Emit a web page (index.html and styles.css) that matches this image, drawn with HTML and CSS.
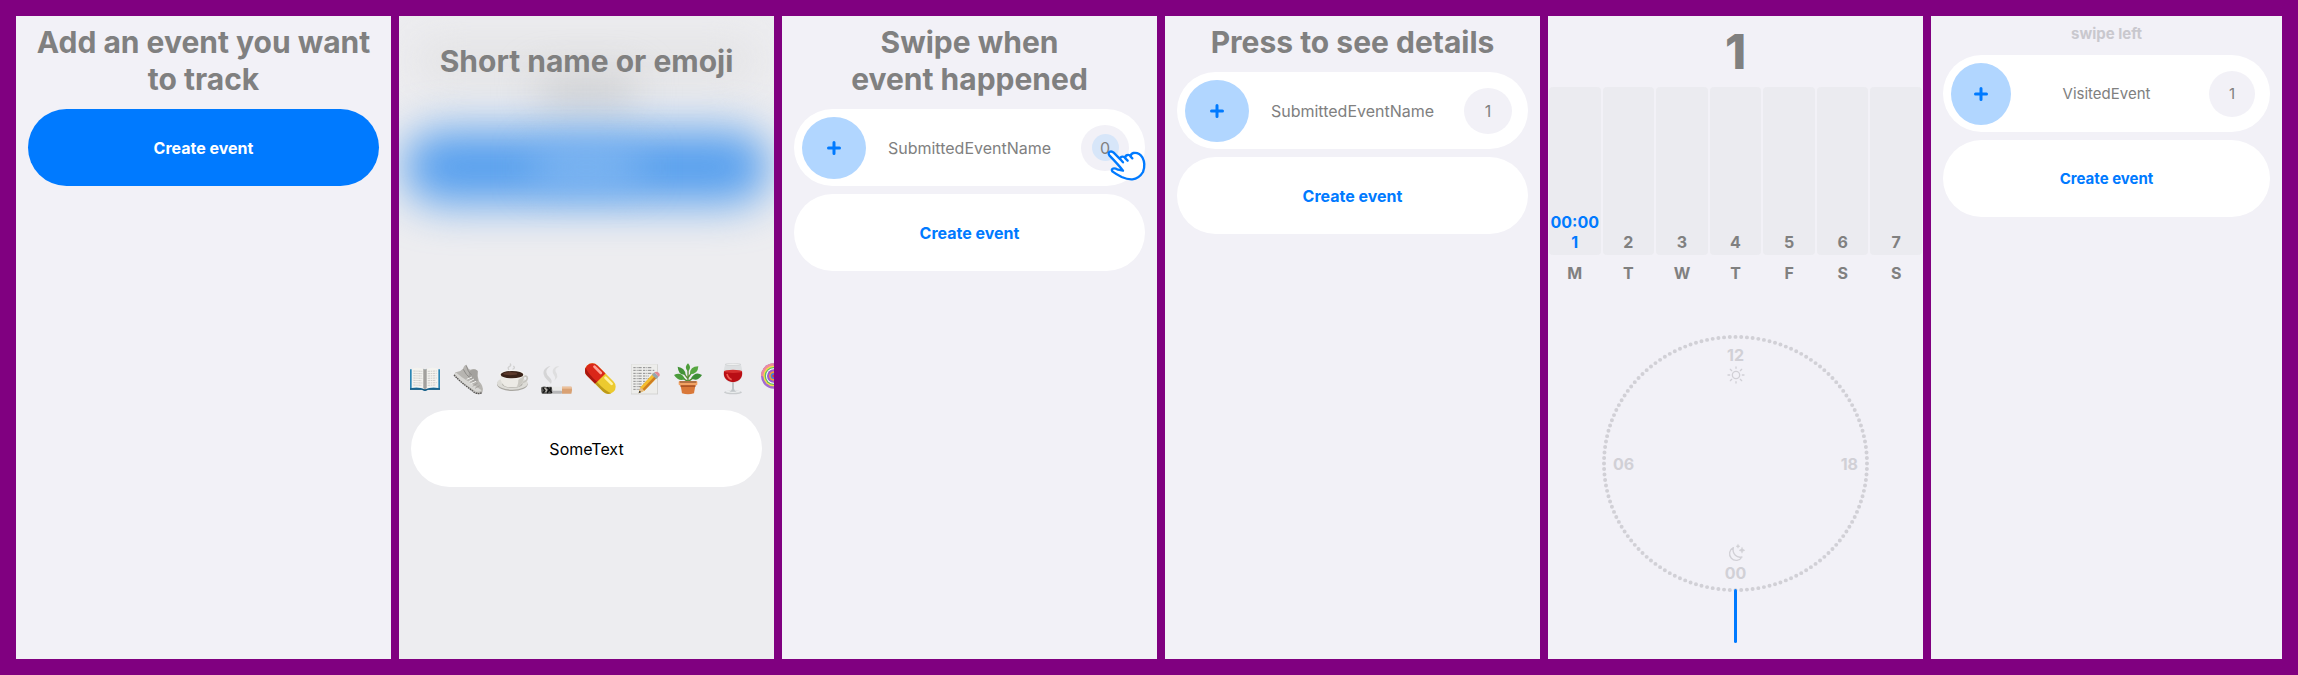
FILE: index.html
```html
<!DOCTYPE html>
<html lang="en">
<head>
<meta charset="utf-8">
<title>Event tracker</title>
<link rel="stylesheet" href="styles.css">
</head>
<body>
<main class="board">
  <section class="screen">
    <h2 class="title">Add an event you want to track</h2>
    <button class="pill pill-primary" type="button">Create event</button>
  </section>

  <section class="screen screen-compose">
    <div class="haze" aria-hidden="true">
      <div class="haze-title"></div>
      <div class="haze-line"></div>
      <div class="haze-pill"></div>
      <div class="haze-label"></div>
    </div>
    <h2 class="title">Short name or emoji</h2>
    <div class="composer">
      <div class="emoji-row">
        <button class="emoji" type="button" aria-label="Book">
          <svg viewBox="0 0 96 96">
            <path d="M3 19H93V80H58L48 84L38 80H3Z" fill="#2b86b4"/>
            <path d="M3 76H93V80H58L48 84L38 80H3Z" fill="#175a80"/>
            <path d="M8 17Q30 10 48 20Q66 10 88 17V75Q66 71 48 79Q30 71 8 75Z" fill="#f4f3ef"/>
            <path d="M42 17Q48 18 48 20Q48 18 54 17V75Q49 76 48 79Q47 76 42 75Z" fill="#b9b8b4"/>
            <path d="M48 20V79" stroke="#77736f" stroke-width="2"/>
            <path d="M13 24L40 25M13 31L40 32M13 38L39 39M13 45L40 46M13 52L38 53M13 59L40 60M13 66L38 67M56 25L83 24M56 32L83 31M56 39L82 38M56 46L83 45M56 53L81 52M56 60L83 59M56 67L81 66" stroke="#bbb9b6" stroke-width="2" stroke-dasharray="7 2 4 2"/>
          </svg>
        </button>
        <button class="emoji" type="button" aria-label="Running shoe">
          <svg viewBox="0 0 96 96">
            <path d="M3 36L8 27Q19 29 30 17Q34 5 41 5Q42 16 52 20Q65 15 74 24Q72 41 78 55Q92 70 89 84Q89 93 74 93L52 78Z" fill="#b7b5b1"/>
            <path d="M8 28Q26 44 45 55L86 82Q82 88 69 86L44 69Q20 53 5 35Z" fill="#d8d7d4"/>
            <path d="M48 25Q65 15 74 24Q71 41 75 53L60 57L47 44Z" fill="#a3a19e"/>
            <path d="M31 19Q39 37 52 45M40 8Q45 29 56 36" fill="none" stroke="#8e8c89" stroke-width="3"/>
            <path d="M41 49L57 42M47 56L63 48M53 62L69 55" stroke="#f2f2f0" stroke-width="3"/>
            <path d="M3 36Q22 57 46 74L65 89Q80 95 87 88" fill="none" stroke="#585653" stroke-width="4" stroke-dasharray="5 2"/>
            <path d="M59 70L74 60M66 76L80 68" stroke="#97948f" stroke-width="2"/>
          </svg>
        </button>
        <button class="emoji" type="button" aria-label="Coffee">
          <svg viewBox="0 0 96 96">
            <ellipse cx="46" cy="64" rx="46" ry="20" fill="#a9a7a1"/>
            <ellipse cx="46" cy="61" rx="46" ry="19" fill="#dddcd7"/>
            <ellipse cx="46" cy="63" rx="31" ry="12" fill="#b4b2ab"/>
            <path d="M78 41Q91 36 91 46Q89 57 70 60" fill="none" stroke="#c6c4be" stroke-width="5"/>
            <path d="M8 33Q10 70 33 73H58Q80 69 83 33Z" fill="#eceae5"/>
            <path d="M58 73Q80 69 83 33Q69 48 64 50Q64 66 58 73Z" fill="#cbc9c2"/>
            <ellipse cx="45" cy="34" rx="38" ry="14" fill="#f4f3f0"/>
            <ellipse cx="45" cy="35" rx="34" ry="11" fill="#392217"/>
            <ellipse cx="40" cy="32" rx="21" ry="5" fill="#5b392a"/>
            <path d="M35 19Q31 13 38 10Q43 7 40 3M48 18Q55 15 50 10" fill="none" stroke="#d1d1d1" stroke-width="4" stroke-linecap="round"/>
          </svg>
        </button>
        <button class="emoji" type="button" aria-label="Cigarette">
          <svg viewBox="0 0 96 96">
            <path d="M30 63Q25 57 16 48Q3 34 9 22Q15 11 29 9Q15 17 16 28Q17 38 27 45Q35 52 30 63Z" fill="#d5d5d6"/>
            <path d="M39 53Q46 45 39 36Q29 23 43 12Q49 8 55 11Q40 15 44 26Q56 41 39 53Z" fill="#dededf"/>
            <rect x="1" y="71" width="92" height="21" rx="3" fill="#e9e9e8"/>
            <rect x="1" y="83" width="62" height="9" rx="2" fill="#b6b6b8"/>
            <path d="M1 73Q9 68 17 72L31 71Q37 83 30 92H4Q-1 85 1 73Z" fill="#555452"/>
            <path d="M6 74L12 83L5 89M18 73L25 80L18 90M30 73L27 83L33 90" fill="none" stroke="#171717" stroke-width="4"/>
            <path d="M11 75L17 81L14 88" fill="none" stroke="#bbb8b1" stroke-width="4"/>
            <path d="M63 71H91Q96 82 91 92H63Z" fill="#d9a173"/>
            <path d="M63 71H91V77H63Z" fill="#ecc19b"/>
          </svg>
        </button>
        <button class="emoji" type="button" aria-label="Medicine">
          <svg viewBox="0 0 96 96">
            <g transform="rotate(45 46 47)">
              <rect x="-10" y="25" width="112" height="44" rx="22" fill="#ecca2f"/>
              <path d="M46 25H12A22 22 0 0 0 12 69H46Z" fill="#da2719"/>
              <path d="M46 69H12A22 22 0 0 1-8 55Q9 63 46 61Z" fill="#a81710"/>
              <path d="M46 69H80A22 22 0 0 0 100 55Q82 63 46 61Z" fill="#bc9919"/>
              <rect x="4" y="30" width="35" height="8" rx="4" fill="#ffa296"/>
              <rect x="51" y="30" width="34" height="8" rx="4" fill="#fff3a1"/>
            </g>
          </svg>
        </button>
        <button class="emoji" type="button" aria-label="Memo">
          <svg viewBox="0 0 96 96">
            <rect x="6" y="4" width="81" height="90" fill="#c9c9c7"/>
            <rect x="7" y="4" width="78" height="88" fill="#ededeb"/>
            <path d="M13 14H70M13 22H76M13 31H73M13 39H59M13 47H66M13 55H57M13 63H48M13 71H42M13 79H32" stroke="#8c8c8c" stroke-width="3" stroke-dasharray="7 3 3 2 10 4"/>
            <path d="M29 91L34 73L73 31L85 43L46 83Z" fill="#f4bd2e"/>
            <path d="M40 79L80 37L85 43L46 83Z" fill="#cf7e21"/>
            <path d="M29 91L34 73L46 83Z" fill="#e6bd86"/>
            <path d="M29 91L31 83L37 87Z" fill="#343434"/>
            <path d="M69 36L76 28L89 41L82 48Z" fill="#93a6ae"/>
            <path d="M76 28Q83 23 90 30Q95 37 89 41Z" fill="#e38a91"/>
          </svg>
        </button>
        <button class="emoji" type="button" aria-label="Potted plant">
          <svg viewBox="0 0 96 96">
            <path d="M45 57V18M44 55L24 42M46 55L67 40M44 46L28 25M46 43L60 23" fill="none" stroke="#568c32" stroke-width="4"/>
            <path d="M45 25Q31 14 45 1Q58 14 45 25Z" fill="#4d9d3a"/>
            <path d="M38 35Q16 38 14 11Q36 14 38 35Z" fill="#439237"/>
            <path d="M51 34Q50 10 76 10Q75 34 51 34Z" fill="#57a741"/>
            <path d="M36 48Q18 58 3 36Q25 25 36 48Z" fill="#4b9c3b"/>
            <path d="M54 46Q67 23 87 36Q73 58 54 46Z" fill="#3e8e36"/>
            <path d="M22 62H68L63 91Q45 97 27 91Z" fill="#d97839"/>
            <rect x="17" y="54" width="56" height="13" rx="3" fill="#f2a365"/>
            <path d="M20 57H70" stroke="#754127" stroke-width="3"/>
            <path d="M22 67H68L67 72H23Z" fill="#ae5526"/>
          </svg>
        </button>
        <button class="emoji" type="button" aria-label="Wine">
          <svg viewBox="0 0 96 96">
            <ellipse cx="48" cy="88" rx="27" ry="6" fill="#c9ccce"/>
            <ellipse cx="48" cy="86" rx="22" ry="4" fill="#eceeef"/>
            <path d="M45 53H51V77Q52 84 59 86H37Q44 84 45 77Z" fill="#bfc4c7"/>
            <path d="M25 3Q18 25 20 37Q25 58 48 60Q71 58 76 37Q78 25 71 3Z" fill="#dddfe1"/>
            <path d="M21 25H75Q79 54 48 58Q17 54 21 25Z" fill="#b90e14"/>
            <ellipse cx="48" cy="25" rx="27" ry="5" fill="#d42e2d"/>
            <path d="M30 33Q33 46 44 50" fill="none" stroke="#f15b51" stroke-width="5"/>
            <ellipse cx="48" cy="4" rx="23" ry="3" fill="#f3f4f4" stroke="#b1b3b6"/>
          </svg>
        </button>
        <button class="emoji" type="button" aria-label="Lollipop">
          <svg viewBox="0 0 96 96">
            <path d="M58 57L91 90" stroke="#ddd" stroke-width="6"/>
            <circle cx="38" cy="39" r="38" fill="#a26bd0"/>
            <path d="M38 1A38 38 0 0 0 0 39L10 41Q12 13 38 10Z" fill="#ef8b9c"/>
            <circle cx="38" cy="39" r="31" fill="#f7df47"/>
            <circle cx="38" cy="39" r="27" fill="#5cba68"/>
            <circle cx="38" cy="39" r="23" fill="#fff"/>
            <circle cx="38" cy="39" r="20" fill="#9b59d0"/>
            <circle cx="38" cy="39" r="14" fill="#ef9b37"/>
            <circle cx="38" cy="39" r="9" fill="#3f7fdc"/>
            <circle cx="38" cy="39" r="4" fill="#e33"/>
          </svg>
        </button>
      </div>
      <input class="pill pill-input" type="text" value="SomeText" aria-label="Short name or emoji">
    </div>
  </section>

  <section class="screen">
    <h2 class="title">Swipe when<br>event happened</h2>
    <div class="pill event">
      <button class="add" type="button" aria-label="Add"><svg class="plus" viewBox="0 0 14 14"><path d="M7 1.5V12.5M1.500 7H12.500"/></svg></button>
      <span class="name">SubmittedEventName</span>
      <span class="count"><span class="touch">0</span>
        <svg class="pointer" viewBox="140 118 123 99" aria-hidden="true"><path d="M147 137Q142 129 149 126Q155 124 160 129L180 149Q179 141 187 141Q192 141 195 146Q194 137 202 136Q208 135 211 141Q211 132 219 130Q236 127 246 143Q257 164 248 187Q236 207 216 209Q202 210 184 202Q166 193 157 186Q152 180 157 177Q162 174 173 180L188 183Q177 168 147 137ZM180 149L188 158M195 146L202 153M211 141L216 146"/></svg>
      </span>
    </div>
    <button class="pill pill-plain" type="button">Create event</button>
  </section>

  <section class="screen">
    <h2 class="title">Press to see details</h2>
    <div class="pill event">
      <button class="add" type="button" aria-label="Add"><svg class="plus" viewBox="0 0 14 14"><path d="M7 1.5V12.5M1.500 7H12.500"/></svg></button>
      <span class="name">SubmittedEventName</span>
      <span class="count">1</span>
    </div>
    <button class="pill pill-plain" type="button">Create event</button>
  </section>

  <section class="screen screen-details">
    <h2 class="total">1</h2>
    <ol class="week">
      <li class="day"><div class="bar bar-active"><span>00:00</span><span>1</span></div><span>M</span></li>
      <li class="day"><div class="bar"><span>2</span></div><span>T</span></li>
      <li class="day"><div class="bar"><span>3</span></div><span>W</span></li>
      <li class="day"><div class="bar"><span>4</span></div><span>T</span></li>
      <li class="day"><div class="bar"><span>5</span></div><span>F</span></li>
      <li class="day"><div class="bar"><span>6</span></div><span>S</span></li>
      <li class="day"><div class="bar"><span>7</span></div><span>S</span></li>
    </ol>
    <div class="dial">
      <svg class="dots" viewBox="0 0 267 267" preserveAspectRatio="none" aria-hidden="true"><circle cx="133.500" cy="133.500" r="131.500" pathLength="144" transform="rotate(-90 133.500 133.500)"/></svg>
      <div class="hour hour-top"><span>12</span>
        <svg class="glyph" viewBox="0 0 54 54"><circle cx="27" cy="27" r="11"/><path d="M27 3V7M27 47V51M3 27H8M46 27H51M10 10L14 14M40 40L44 44M44 10L40 14M14 40L10 44"/></svg>
      </div>
      <span class="hour hour-left">06</span>
      <span class="hour hour-right">18</span>
      <div class="hour hour-bottom">
        <svg class="glyph" viewBox="0 0 54 54"><path d="M19 11A20 20 0 1 0 45 39Q33 42 25 34Q16 25 19 11Z"/><path class="star" d="M45 10Q46 18 54 19Q46 20 45 28Q44 20 36 19Q44 18 45 10ZM33 1Q34 6 39 7Q34 8 33 13Q32 8 27 7Q32 6 33 1Z"/></svg>
        <span>00</span>
      </div>
    </div>
    <div class="needle"></div>
  </section>

  <section class="screen screen-narrow">
    <p class="hint">swipe left</p>
    <div class="pill event">
      <button class="add" type="button" aria-label="Add"><svg class="plus" viewBox="0 0 14 14"><path d="M7 1.5V12.5M1.500 7H12.500"/></svg></button>
      <span class="name">VisitedEvent</span>
      <span class="count">1</span>
    </div>
    <button class="pill pill-plain" type="button">Create event</button>
  </section>
</main>
</body>
</html>
```

FILE: styles.css
```css
* { box-sizing: border-box; }

body {
  margin: 0;
  background: #800080;
  color: #808080;
  font: 400 16px/20px Inter, "Liberation Sans", sans-serif;
}

button, input { font: inherit; border: 0; }

.board {
  display: grid;
  grid-template-columns: repeat(5, 375fr) 351fr;
  gap: 8px;
  min-height: 100vh;
  padding: 16px;
}

.screen {
  position: relative;
  display: flex;
  flex-direction: column;
  gap: 8px;
  min-width: 0;
  padding: 8px 12px;
  overflow: hidden;
  background: #f2f1f7;
}

.title {
  margin: 0 0 3px;
  font-size: 30px;
  line-height: 37px;
  font-weight: 700;
  text-align: center;
}

.pill {
  width: 100%;
  height: 77px;
  flex: none;
  border-radius: 40px;
  background: #fff;
  text-align: center;
}

.pill-primary { background: #007aff; color: #fff; font-weight: 700; }
.pill-plain { color: #007aff; font-weight: 700; }
.pill-input { color: #000; }

.event {
  display: grid;
  grid-template-columns: 64px 1fr 64px;
  align-items: center;
  justify-items: center;
  padding: 0 8px;
}

.add {
  display: grid;
  place-items: center;
  width: 64px;
  height: 62px;
  padding: 0;
  border-radius: 50%;
  background: #b1d6ff;
}

.plus { width: 14px; height: 14px; fill: none; stroke: #007aff; stroke-width: 3; stroke-linecap: round; }

.count {
  position: relative;
  display: grid;
  place-items: center;
  width: 48px;
  height: 46px;
  border-radius: 50%;
  background: #f2f1f7;
}

.touch {
  display: grid;
  place-items: center;
  width: 27px;
  height: 27px;
  border-radius: 50%;
  background: #d7e6f9;
}

.pointer {
  position: absolute;
  left: 26px;
  top: 24px;
  width: 41px;
  height: 33px;
  fill: #fff;
  stroke: #007aff;
  stroke-width: 7;
  stroke-linecap: round;
  stroke-linejoin: round;
}

/* Name entry */
.screen-compose { padding-top: 27px; background: #ededf0; }
.screen-compose .title { position: relative; }

.haze { position: absolute; inset: 0; }
.haze div { position: absolute; }
.haze-title { left: 20px; right: 20px; top: 28px; height: 34px; background: #e0e0e1; filter: blur(22px); }
.haze-line { left: 140px; right: 140px; top: 62px; height: 28px; background: #c9cacc; filter: blur(20px); }
.haze-pill { left: 4px; right: 4px; top: 114px; height: 74px; border-radius: 40px; background: #569fee; filter: blur(22px); }
.haze-label { left: 136px; right: 136px; top: 138px; height: 26px; background: #8fbff3; filter: blur(20px); }

.composer {
  position: relative;
  display: flex;
  flex-direction: column;
  gap: 15px;
  margin-top: auto;
  margin-bottom: 164px;
}

.emoji-row { display: flex; gap: 12px; margin: 0 -12px 0 -2px; overflow: hidden; }
.emoji { flex: none; width: 32px; height: 32px; padding: 0; background: none; }
.emoji svg { display: block; width: 32px; height: 32px; }

/* Event details */
.screen-details { align-items: center; padding: 8px 0; font-weight: 700; }
.total { margin: 0; font-size: 48px; line-height: 55px; font-weight: 800; }

.week { display: flex; width: 100%; margin: 0; padding: 0; list-style: none; }
.day { display: flex; flex: 1; flex-direction: column; align-items: center; gap: 8px; min-width: 0; padding: 0 1px; }
.bar {
  display: flex;
  flex-direction: column;
  align-items: center;
  justify-content: flex-end;
  width: 100%;
  height: 168px;
  padding-bottom: 3px;
  border-radius: 4px;
  background: #ebebf0;
}
.bar-active { color: #007aff; }

.dial {
  display: grid;
  grid-template: 1fr auto 1fr / 1fr 1fr;
  width: 267px;
  height: 257px;
  margin-top: 44px;
  color: #d1d0d6;
}
.dots {
  grid-area: 1 / 1 / -1 / -1;
  width: 100%;
  height: 257px;
  fill: none;
  stroke: #d1d0d6;
  stroke-width: 4;
  stroke-linecap: round;
  stroke-dasharray: 0 1;
}
.hour { display: flex; flex-direction: column; align-items: center; gap: 1px; }
.hour-top { grid-area: 1 / 1 / 2 / -1; padding-top: 10px; }
.hour-left { grid-area: 2 / 1; align-items: flex-start; padding-left: 11px; }
.hour-right { grid-area: 2 / 2; align-items: flex-end; padding-right: 11px; }
.hour-bottom { grid-area: 3 / 1 / 4 / -1; justify-content: flex-end; padding-bottom: 9px; }
.glyph { width: 18px; height: 18px; fill: none; stroke: #d1d0d6; stroke-width: 4; stroke-linecap: round; stroke-linejoin: round; overflow: visible; }
.star { fill: #d1d0d6; stroke-width: 1; }
.needle { width: 3px; height: 54px; margin-top: -11px; border-radius: 2px; background: #007aff; z-index: 1; }

/* Narrow list */
.screen-narrow { font-size: 15px; }
.screen-narrow .event { grid-template-columns: 60px 1fr 60px; }
.screen-narrow .add { width: 60px; }
.screen-narrow .count { width: 46px; }
.hint { margin: 0 0 3px; color: #c9c8ce; font-weight: 700; text-align: center; }
```
